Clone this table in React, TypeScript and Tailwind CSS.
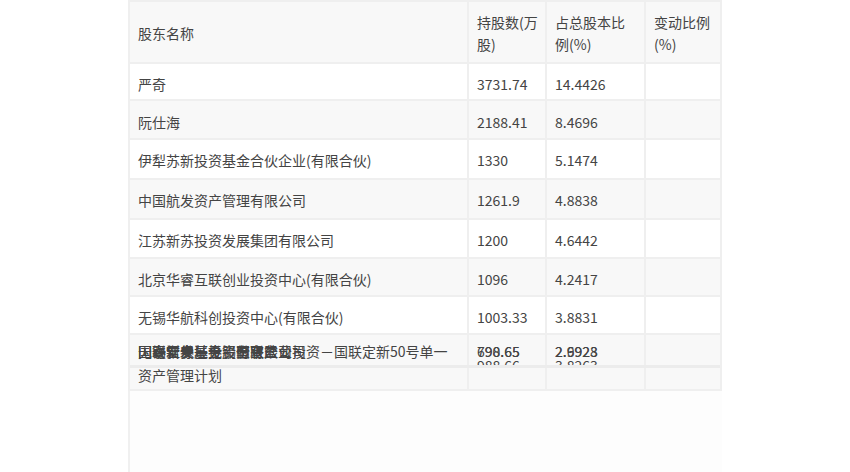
import React from "react";

const cols = "grid grid-cols-[337px_76px_97px_74px] grid-rows-[100%] gap-[2px]";
const font = { fontFamily: '"Noto Sans CJK SC", "Noto Sans", sans-serif' };

type Row = { name: string; shares: string; pct: string; h: string; bg: string; pt: string };

const rows: Row[] = [
  { name: "严奇", shares: "3731.74", pct: "14.4426", h: "h-[35px]", bg: "bg-white", pt: "pt-[6px]" },
  { name: "阮仕海", shares: "2188.41", pct: "8.4696", h: "h-[37px]", bg: "bg-[#f8f8f8]", pt: "pt-[5px]" },
  { name: "伊犁苏新投资基金合伙企业(有限合伙)", shares: "1330", pct: "5.1474", h: "h-[38px]", bg: "bg-white", pt: "pt-[3px]" },
  { name: "中国航发资产管理有限公司", shares: "1261.9", pct: "4.8838", h: "h-[38px]", bg: "bg-[#f8f8f8]", pt: "pt-[3px]" },
  { name: "江苏新苏投资发展集团有限公司", shares: "1200", pct: "4.6442", h: "h-[37px]", bg: "bg-white", pt: "pt-[3px]" },
  { name: "北京华睿互联创业投资中心(有限合伙)", shares: "1096", pct: "4.2417", h: "h-[36px]", bg: "bg-[#f8f8f8]", pt: "pt-[4px]" },
  { name: "无锡华航科创投资中心(有限合伙)", shares: "1003.33", pct: "3.8831", h: "h-[36px]", bg: "bg-white", pt: "pt-[4px]" },
];

function Cell({ children, cls }: { children?: React.ReactNode; cls: string }) {
  return <div className={`flex items-center pl-[8px] whitespace-nowrap overflow-hidden ${cls}`}>{children}</div>;
}

export default function App() {
  return (
    <div className="min-h-screen bg-white text-[14px] text-[#444]" style={font}>
      <div className="ml-[128px] w-[594px] h-[472px] border-l-2 border-[#f0f0f0] bg-[#fdfdfd]">
        <div className="-ml-[2px] bg-[#efefef] p-[2px] flex flex-col gap-[2px]">
          {/* header */}
          <div className={`${cols} h-[60px]`}>
            <Cell cls="bg-[#f8f8f8] pt-[2px]">股东名称</Cell>
            <Cell cls="bg-[#f8f8f8] pt-[2px] leading-[22px]">
              <span>持股数(万<br />股)</span>
            </Cell>
            <Cell cls="bg-[#f8f8f8] pt-[2px] leading-[22px]">
              <span>占总股本比<br />例(%)</span>
            </Cell>
            <Cell cls="bg-[#f8f8f8] pt-[2px] leading-[22px]">
              <span>变动比例<br />(%)</span>
            </Cell>
          </div>
          {rows.map((r) => (
            <div key={r.name} className={`${cols} ${r.h}`}>
              <Cell cls={`${r.bg} ${r.pt}`}>{r.name}</Cell>
              <Cell cls={`${r.bg} ${r.pt}`}>{r.shares}</Cell>
              <Cell cls={`${r.bg} ${r.pt}`}>{r.pct}</Cell>
              <Cell cls={r.bg} />
            </div>
          ))}
          {/* glitched overlapping row */}
          <div className="relative h-[54px] overflow-hidden">
            <div className={`${cols} h-full`}>
              <div className="bg-[#f8f8f8]" />
              <div className="bg-[#f8f8f8]" />
              <div className="bg-[#f8f8f8]" />
              <div className="bg-[#f8f8f8]" />
            </div>
            {/* second-line numbers (clipped) */}
            <div className="absolute left-[347px] top-[21px] leading-[18px]">988.66</div>
            <div className="absolute left-[425px] top-[21px] leading-[18px]">3.8263</div>
            {/* covering row */}
            <div className={`absolute left-0 top-[30px] h-[24px] w-full ${cols} border-t-[3px] border-[#ececec]`}>
              <div className="bg-[#f8f8f8]" />
              <div className="bg-[#f8f8f8]" />
              <div className="bg-[#f8f8f8]" />
              <div className="bg-[#f8f8f8]" />
            </div>
            {/* overlapping first lines */}
            <div className="absolute left-[8px] top-[7px] leading-[18px] whitespace-nowrap">国联证券－无锡国联产业投资－国联定新50号单一</div>
            <div className="absolute left-[8px] top-[7px] leading-[18px] whitespace-nowrap">国泰君安证券股份有限公司</div>
            <div className="absolute left-[8px] top-[7px] leading-[18px] whitespace-nowrap">无锡新发展投资有限公司</div>
            <div className="absolute left-[8px] top-[7px] leading-[18px] whitespace-nowrap">国寿安保基金－聚宝盆</div>
            <div className="absolute left-[347px] top-[7px] leading-[18px]">790.65</div>
            <div className="absolute left-[347px] top-[7px] leading-[18px]">698.65</div>
            <div className="absolute left-[425px] top-[7px] leading-[18px]">2.9928</div>
            <div className="absolute left-[425px] top-[7px] leading-[18px]">2.6923</div>
            <div className="absolute left-[8px] top-[31px] leading-[18px] whitespace-nowrap">资产管理计划</div>
          </div>
        </div>
      </div>
    </div>
  );
}
